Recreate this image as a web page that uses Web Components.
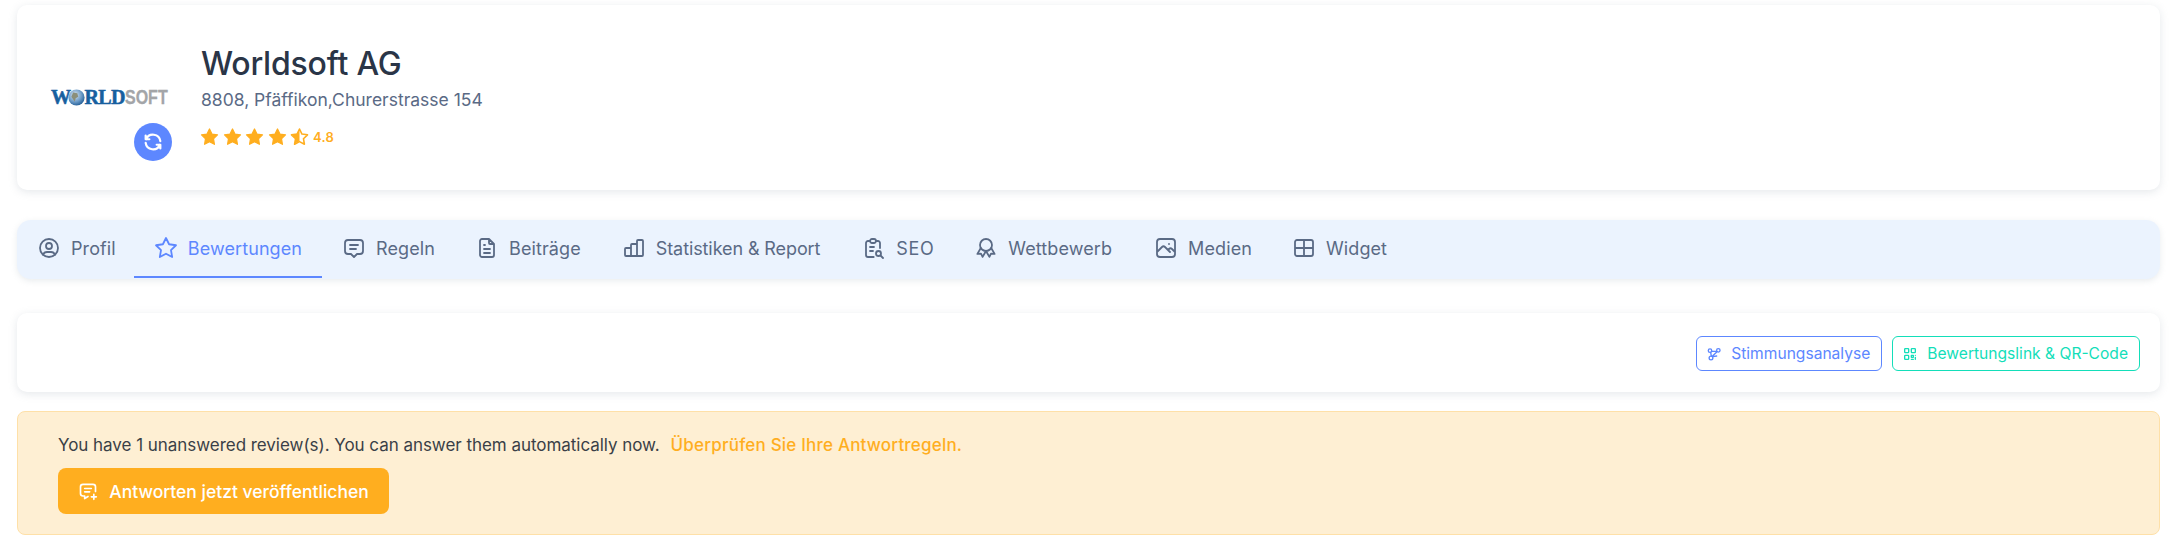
<!DOCTYPE html>
<html lang="de">
<head>
<meta charset="utf-8">
<title>Worldsoft AG</title>
<style>
    html,body{margin:0;background:#fff;}
    body{font-family:"Inter","Liberation Sans",sans-serif;color:#2a3547;}
</style>
</head>
<body>
<company-page></company-page>

<script>
const ICONS={
    user:`<circle cx="12" cy="12" r="9"/><circle cx="12" cy="10" r="3"/><path d="M6.168 18.849a4 4 0 0 1 3.832 -2.849h4a4 4 0 0 1 3.834 2.855"/>`,
    star:`<path d="M12 17.75l-6.172 3.245l1.179 -6.873l-5 -4.867l6.9 -1l3.086 -6.253l3.086 6.253l6.9 1l-5 4.867l1.179 6.873z"/>`,
    message:`<path d="M8 9h8M8 13h6M9 18h-3a3 3 0 0 1 -3 -3v-8a3 3 0 0 1 3 -3h12a3 3 0 0 1 3 3v8a3 3 0 0 1 -3 3h-3l-3 3l-3 -3z"/>`,
    file:`<path d="M14 3v4a1 1 0 0 0 1 1h4M17 21h-10a2 2 0 0 1 -2 -2v-14a2 2 0 0 1 2 -2h7l5 5v11a2 2 0 0 1 -2 2zM9 9h1M9 13h6M9 17h6"/>`,
    chart:`<path d="M3 13a1 1 0 0 1 1 -1h4a1 1 0 0 1 1 1v6a1 1 0 0 1 -1 1h-4a1 1 0 0 1 -1 -1zM15 5a1 1 0 0 1 1 -1h4a1 1 0 0 1 1 1v14a1 1 0 0 1 -1 1h-4a1 1 0 0 1 -1 -1zM9 9a1 1 0 0 1 1 -1h4a1 1 0 0 1 1 1v10a1 1 0 0 1 -1 1h-4a1 1 0 0 1 -1 -1zM4 20h14"/>`,
    report:`<path d="M8 5h-2a2 2 0 0 0 -2 2v12a2 2 0 0 0 2 2h5.697M18 12v-5a2 2 0 0 0 -2 -2h-2M8 5a2 2 0 0 1 2 -2h2a2 2 0 0 1 2 2a2 2 0 0 1 -2 2h-2a2 2 0 0 1 -2 -2zM8 11h4M8 15h3M18.5 19.5l2.5 2.5"/><circle cx="16.5" cy="17.5" r="2.5"/>`,
    award:`<circle cx="12" cy="9" r="6"/><path d="M12 15l3.4 5.89l1.598 -3.233l3.598 .232l-3.4 -5.889M6.802 12l-3.4 5.89l3.598 -.233l1.598 3.232l3.4 -5.889"/>`,
    photo:`<path d="M15 8h.01M3 6a3 3 0 0 1 3 -3h12a3 3 0 0 1 3 3v12a3 3 0 0 1 -3 3h-12a3 3 0 0 1 -3 -3zM3 16l5 -5c.928 -.893 2.072 -.893 3 0l5 5M14 14l1 -1c.928 -.893 2.072 -.893 3 0l3 3"/>`,
    widget:`<path d="M3 6a2 2 0 0 1 2 -2h14a2 2 0 0 1 2 2v12a2 2 0 0 1 -2 2h-14a2 2 0 0 1 -2 -2zM3 12h18M12 4v16"/>`,
    refresh:`<path d="M20 11a8.1 8.1 0 0 0 -15.5 -2m-.5 -4v4h4M4 13a8.1 8.1 0 0 0 15.5 2m.5 4v-4h-4"/>`,
    affiliate:`<path d="M7 9.5l1 5.5M8.5 8h7M10 16l6 -1M9.5 15.5l7 -7"/><circle cx="6" cy="7" r="2.6"/><circle cx="18.5" cy="6.5" r="2.6"/><circle cx="7.5" cy="18" r="2.8"/>`,
    qrcode:`<path d="M4 5a1 1 0 0 1 1 -1h4a1 1 0 0 1 1 1v4a1 1 0 0 1 -1 1h-4a1 1 0 0 1 -1 -1zM4 15a1 1 0 0 1 1 -1h4a1 1 0 0 1 1 1v4a1 1 0 0 1 -1 1h-4a1 1 0 0 1 -1 -1zM14 5a1 1 0 0 1 1 -1h4a1 1 0 0 1 1 1v4a1 1 0 0 1 -1 1h-4a1 1 0 0 1 -1 -1zM14 14h3v3h-3zM20 14v.01M14 20h3M20 17v3"/>`,
    messageplus:`<path d="M8 9h8M8 13h6M12.01 18.594l-4.01 2.406v-3h-2a3 3 0 0 1 -3 -3v-8a3 3 0 0 1 3 -3h12a3 3 0 0 1 3 3v5.5M16 19h6M19 16v6"/>`
};

class UiIcon extends HTMLElement{
    static get observedAttributes(){return ["name","size","stroke"];}
    constructor(){
        super();
        this.attachShadow({mode:"open"});
    }
    connectedCallback(){this.render();}
    attributeChangedCallback(){this.render();}
    render(){
        const size=this.getAttribute("size")||24;
        const stroke=this.getAttribute("stroke")||2;
        this.shadowRoot.innerHTML=`
            <style>
                :host{display:inline-flex;flex:none;width:${size}px;height:${size}px;}
                svg{width:100%;height:100%;fill:none;stroke:currentColor;stroke-linecap:round;stroke-linejoin:round;}
            </style>
            <svg viewBox="0 0 24 24" stroke-width="${stroke}">${ICONS[this.getAttribute("name")]||""}</svg>`;
    }
}
customElements.define("ui-icon",UiIcon);

class UiCard extends HTMLElement{
    constructor(){
        super();
        this.attachShadow({mode:"open"}).innerHTML=`
            <style>
                :host{display:block;background:#fff;border-radius:10px;box-shadow:0 2px 8px rgba(145,158,171,.24);box-sizing:border-box;}
            </style>
            <slot></slot>`;
    }
}
customElements.define("ui-card",UiCard);

class RatingStars extends HTMLElement{
    constructor(){
        super();
        const star=`<path d="M12 2.5l3.1 6.4l7 1l-5.1 4.9l1.2 7l-6.2 -3.3l-6.2 3.3l1.2 -7l-5.1 -4.9l7 -1z"/>`;
        this.attachShadow({mode:"open"}).innerHTML=`
            <style>
                :host{display:flex;align-items:center;gap:3.6px;color:#ffae1f;margin-left:-1px;}
                svg{width:19px;height:19px;fill:currentColor;stroke:currentColor;stroke-width:1.6;stroke-linejoin:round;flex:none;}
                svg.half{fill:none;stroke-width:2;}
                span{font-size:13px;font-weight:600;letter-spacing:.2px;}
            </style>
            <svg viewBox="0 0 24 24">${star}</svg>
            <svg viewBox="0 0 24 24">${star}</svg>
            <svg viewBox="0 0 24 24">${star}</svg>
            <svg viewBox="0 0 24 24">${star}</svg>
            <svg class="half" viewBox="0 0 24 24">${star}<path fill="currentColor" stroke="none" d="M12 2.5v15.5l-6.2 3.3l1.2 -7l-5.1 -4.9l7 -1z"/></svg>
            <span><slot></slot></span>`;
    }
}
customElements.define("rating-stars",RatingStars);

class BrandLogo extends HTMLElement{
    constructor(){
        super();
        this.attachShadow({mode:"open"}).innerHTML=`
            <style>
                :host{display:flex;align-items:center;width:117px;font-family:"Liberation Serif",serif;font-weight:700;font-size:20px;line-height:18px;height:18px;color:#17609f;letter-spacing:-.6px;-webkit-text-stroke:.5px #17609f;}
                svg{width:17px;height:17px;margin:0 -1px 0 -2px;flex:none;}
                .soft{font-family:"Liberation Sans",sans-serif;color:#a3a5a8;-webkit-text-stroke:.3px #a3a5a8;font-size:20px;transform-origin:left center;transform:scaleX(.8);display:inline-block;width:43px;letter-spacing:0;}
            </style>
            <span>W</span>
            <svg viewBox="0 0 20 20"><defs><radialGradient id="g" cx=".4" cy=".35" r=".7"><stop offset="0" stop-color="#dfeaf5"/><stop offset=".6" stop-color="#6c9ac6"/><stop offset="1" stop-color="#1d5a94"/></radialGradient></defs><circle cx="10" cy="10" r="9.5" fill="url(#g)"/><path d="M6 4l5 1l1 4l-3 2l-1 4l-2-3l-2-3z" fill="#8b8f7a"/></svg>
            <span>RLD</span><span class="soft">SOFT</span>`;
    }
}
customElements.define("brand-logo",BrandLogo);

class CompanyHeader extends HTMLElement{
    constructor(){
        super();
        this.attachShadow({mode:"open"}).innerHTML=`
            <style>
                :host{display:block;}
                ui-card{display:flex;align-items:stretch;height:185px;padding:0 0 0 34px;}
                .logo{width:117px;margin-right:33px;display:flex;flex-direction:column;align-items:center;padding-top:83px;box-sizing:border-box;}
                .sync{width:38px;height:38px;border-radius:50%;background:#5d87ff;color:#fff;display:flex;align-items:center;justify-content:center;align-self:flex-end;margin:17px -4px 0 0;}
                .info{padding-top:37px;}
                h1{margin:0;font-size:32px;line-height:44px;font-weight:500;color:#2a3547;letter-spacing:-.2px;}
                p{margin:1px 0 0;font-size:17.5px;line-height:26px;color:#5a6a85;}
                rating-stars{margin-top:14px;}
            </style>
            <ui-card>
                <div class="logo">
                    <brand-logo></brand-logo>
                    <div class="sync"><ui-icon name="refresh" size="22" stroke="2.4"></ui-icon></div>
                </div>
                <div class="info">
                    <h1>Worldsoft AG</h1>
                    <p>8808, Pfäffikon,Churerstrasse 154</p>
                    <rating-stars>4.8</rating-stars>
                </div>
            </ui-card>`;
    }
}
customElements.define("company-header",CompanyHeader);

class TabItem extends HTMLElement{
    constructor(){
        super();
        this.attachShadow({mode:"open"}).innerHTML=`
            <style>
                :host{display:flex;align-items:center;gap:10px;padding:0 20px 3px;height:59px;box-sizing:border-box;font-size:18px;letter-spacing:.1px;color:#5a6a85;position:relative;}
                :host([active]){color:#5d87ff;}
                :host([active])::after{content:"";position:absolute;left:0;right:0;bottom:1px;height:2px;background:#5d87ff;}
            </style>
            <ui-icon stroke="1.8"></ui-icon>
            <slot></slot>`;
    }
    connectedCallback(){
        this.shadowRoot.querySelector("ui-icon").setAttribute("name",this.getAttribute("icon"));
    }
}
customElements.define("tab-item",TabItem);

class TabBar extends HTMLElement{
    constructor(){
        super();
        this.attachShadow({mode:"open"}).innerHTML=`
            <style>
                :host{display:flex;background:#ebf3fe;border-radius:14px;height:59px;box-shadow:0 2px 6px rgba(145,158,171,.2);}
            </style>
            <slot></slot>`;
    }
}
customElements.define("tab-bar",TabBar);

class OutlineButton extends HTMLElement{
    constructor(){
        super();
        this.attachShadow({mode:"open"}).innerHTML=`
            <style>
                :host{display:inline-flex;align-items:center;gap:9px;height:35px;box-sizing:border-box;padding:0 11px 0 9px;border:1.5px solid currentColor;border-radius:6px;font-size:15.6px;color:#5d87ff;}
            </style>
            <ui-icon size="16" stroke="2"></ui-icon>
            <slot></slot>`;
    }
    connectedCallback(){
        this.shadowRoot.querySelector("ui-icon").setAttribute("name",this.getAttribute("icon"));
    }
}
customElements.define("outline-button",OutlineButton);

class ReviewAlert extends HTMLElement{
    constructor(){
        super();
        this.attachShadow({mode:"open"}).innerHTML=`
            <style>
                :host{display:block;box-sizing:border-box;height:124px;background:#feefd3;border:1.5px solid #fee0a8;border-radius:8px;padding:19px 40px 0;}
                .line{display:flex;gap:11px;font-size:17px;line-height:28px;color:#3a3f47;letter-spacing:-.04px;}
                a{color:#ffae1f;font-weight:500;text-decoration:none;letter-spacing:.2px;}
                button{margin-top:9px;height:46px;width:331px;display:flex;align-items:center;justify-content:center;gap:11px;border:0;border-radius:8px;background:#ffae1f;color:#fff;font:500 17.5px "Inter","Liberation Sans",sans-serif;}
            </style>
            <div class="line"><span>You have 1 unanswered review(s). You can answer them automatically now.</span><a href="#">Überprüfen Sie Ihre Antwortregeln.</a></div>
            <button><ui-icon name="messageplus" size="20" stroke="2"></ui-icon>Antworten jetzt veröffentlichen</button>`;
    }
}
customElements.define("review-alert",ReviewAlert);

class CompanyPage extends HTMLElement{
    constructor(){
        super();
        this.attachShadow({mode:"open"}).innerHTML=`
            <style>
                :host{display:flex;flex-direction:column;padding:5px 18px 0 17px;box-sizing:border-box;width:2178px;height:541px;overflow:hidden;}
                company-header{margin-bottom:30px;}
                tab-bar{margin-bottom:34px;}
                .actions{display:flex;justify-content:flex-end;align-items:center;gap:10px;height:79px;padding:2px 20px 0;box-sizing:border-box;}
                ui-card.row{margin-bottom:19px;}
            </style>
            <company-header></company-header>
            <tab-bar>
                <tab-item icon="user" style="padding-right:18px">Profil</tab-item>
                <tab-item icon="star" active>Bewertungen</tab-item>
                <tab-item icon="message">Regeln</tab-item>
                <tab-item icon="file">Beiträge</tab-item>
                <tab-item icon="chart" style="letter-spacing:-.1px;padding-left:21px;padding-right:22px">Statistiken &amp; Report</tab-item>
                <tab-item icon="report" style="letter-spacing:.6px">SEO</tab-item>
                <tab-item icon="award" style="padding-right:22px">Wettbewerb</tab-item>
                <tab-item icon="photo">Medien</tab-item>
                <tab-item icon="widget">Widget</tab-item>
            </tab-bar>
            <ui-card class="row">
                <div class="actions">
                    <outline-button icon="affiliate">Stimmungsanalyse</outline-button>
                    <outline-button icon="qrcode" style="color:#13deb9">Bewertungslink &amp; QR-Code</outline-button>
                </div>
            </ui-card>
            <review-alert></review-alert>`;
    }
}
customElements.define("company-page",CompanyPage);
</script>
</body>
</html>
